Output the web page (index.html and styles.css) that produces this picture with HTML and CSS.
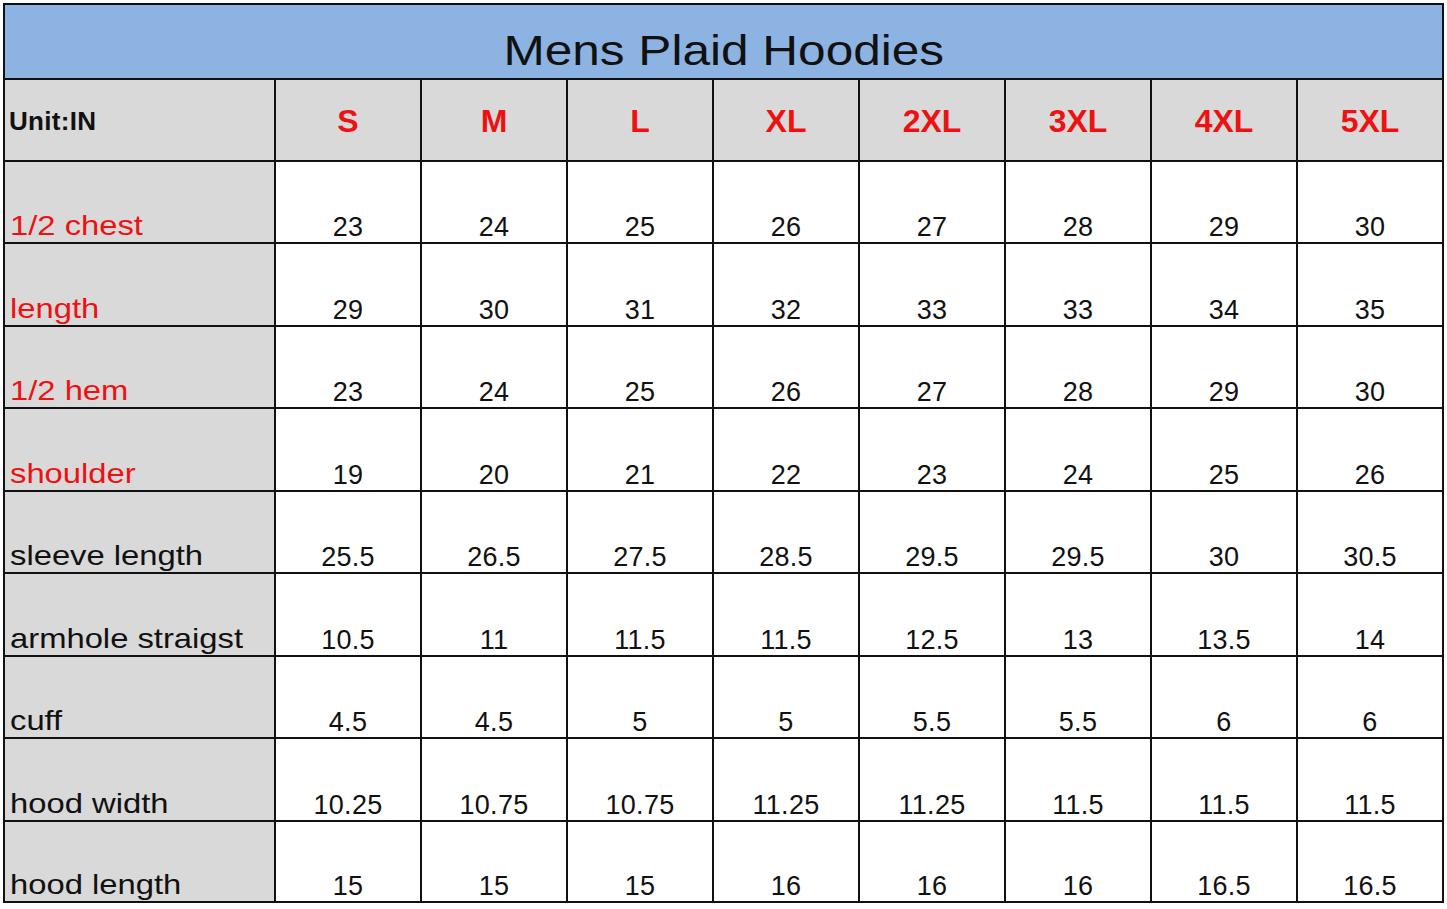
FILE: index.html
```html
<!DOCTYPE html>
<html lang="en">
<head>
<meta charset="utf-8">
<title>Mens Plaid Hoodies</title>
<link rel="stylesheet" href="styles.css">
</head>
<body>
<div class="chart">
  <div class="title"><span class="wide">Mens Plaid Hoodies</span></div>

  <div class="cell head label-head">Unit:IN</div>
  <div class="cell head size">S</div>
  <div class="cell head size">M</div>
  <div class="cell head size">L</div>
  <div class="cell head size">XL</div>
  <div class="cell head size">2XL</div>
  <div class="cell head size">3XL</div>
  <div class="cell head size">4XL</div>
  <div class="cell head size">5XL</div>

  <div class="cell label red"><span class="wide">1/2 chest</span></div>
  <div class="cell num">23</div><div class="cell num">24</div><div class="cell num">25</div><div class="cell num">26</div><div class="cell num">27</div><div class="cell num">28</div><div class="cell num">29</div><div class="cell num">30</div>

  <div class="cell label red"><span class="wide">length</span></div>
  <div class="cell num">29</div><div class="cell num">30</div><div class="cell num">31</div><div class="cell num">32</div><div class="cell num">33</div><div class="cell num">33</div><div class="cell num">34</div><div class="cell num">35</div>

  <div class="cell label red"><span class="wide">1/2 hem</span></div>
  <div class="cell num">23</div><div class="cell num">24</div><div class="cell num">25</div><div class="cell num">26</div><div class="cell num">27</div><div class="cell num">28</div><div class="cell num">29</div><div class="cell num">30</div>

  <div class="cell label red"><span class="wide">shoulder</span></div>
  <div class="cell num">19</div><div class="cell num">20</div><div class="cell num">21</div><div class="cell num">22</div><div class="cell num">23</div><div class="cell num">24</div><div class="cell num">25</div><div class="cell num">26</div>

  <div class="cell label"><span class="wide">sleeve length</span></div>
  <div class="cell num">25.5</div><div class="cell num">26.5</div><div class="cell num">27.5</div><div class="cell num">28.5</div><div class="cell num">29.5</div><div class="cell num">29.5</div><div class="cell num">30</div><div class="cell num">30.5</div>

  <div class="cell label"><span class="wide">armhole straigst</span></div>
  <div class="cell num">10.5</div><div class="cell num">11</div><div class="cell num">11.5</div><div class="cell num">11.5</div><div class="cell num">12.5</div><div class="cell num">13</div><div class="cell num">13.5</div><div class="cell num">14</div>

  <div class="cell label"><span class="wide">cuff</span></div>
  <div class="cell num">4.5</div><div class="cell num">4.5</div><div class="cell num">5</div><div class="cell num">5</div><div class="cell num">5.5</div><div class="cell num">5.5</div><div class="cell num">6</div><div class="cell num">6</div>

  <div class="cell label"><span class="wide">hood width</span></div>
  <div class="cell num">10.25</div><div class="cell num">10.75</div><div class="cell num">10.75</div><div class="cell num">11.25</div><div class="cell num">11.25</div><div class="cell num">11.5</div><div class="cell num">11.5</div><div class="cell num">11.5</div>

  <div class="cell label"><span class="wide">hood length</span></div>
  <div class="cell num">15</div><div class="cell num">15</div><div class="cell num">15</div><div class="cell num">16</div><div class="cell num">16</div><div class="cell num">16</div><div class="cell num">16.5</div><div class="cell num">16.5</div>
</div>
</body>
</html>
```

FILE: styles.css
```css
html, body {
  margin: 0;
  padding: 0;
  background: #ffffff;
}

body {
  padding: 3px 0 0 3px;
  font-family: "Liberation Sans", Arial, sans-serif;
  color: #111111;
}

.chart {
  display: grid;
  grid-template-columns: 271px repeat(8, 146px);
  grid-template-rows: 75px 82px 82px 83px 82px 83px 82px 83px 82px 83px 81px;
  width: max-content;
  border-top: 2px solid #111;
  border-left: 2px solid #111;
}

.wide {
  display: inline-block;
  transform: scaleX(1.17);
  transform-origin: left bottom;
  white-space: nowrap;
}

.title {
  grid-column: 1 / -1;
  box-sizing: border-box;
  background: #8db3e2;
  border-right: 2px solid #111;
  border-bottom: 2px solid #111;
  display: flex;
  align-items: flex-end;
  justify-content: center;
  padding-bottom: 6px;
  font-size: 42px;
  line-height: 1;
  color: #111;
}

.title .wide {
  transform: scaleX(1.18);
  transform-origin: center bottom;
}

.cell {
  box-sizing: border-box;
  border-right: 2px solid #111;
  border-bottom: 2px solid #111;
  display: flex;
  line-height: 1;
}

.head {
  background: #d9d9d9;
  align-items: center;
  font-weight: bold;
}

.label-head {
  font-size: 26px;
  letter-spacing: 0.3px;
  padding-left: 4px;
  padding-top: 1px;
}

.size {
  justify-content: center;
  font-size: 32px;
  color: #ee1111;
  padding-top: 2px;
}

.label {
  background: #d9d9d9;
  align-items: flex-end;
  padding-left: 5px;
  padding-bottom: 2px;
  font-size: 28px;
}

.red {
  color: #ee1111;
}

.num {
  align-items: flex-end;
  justify-content: center;
  padding-bottom: 1px;
  font-size: 27px;
  letter-spacing: 0.3px;
  background: #ffffff;
}
```
